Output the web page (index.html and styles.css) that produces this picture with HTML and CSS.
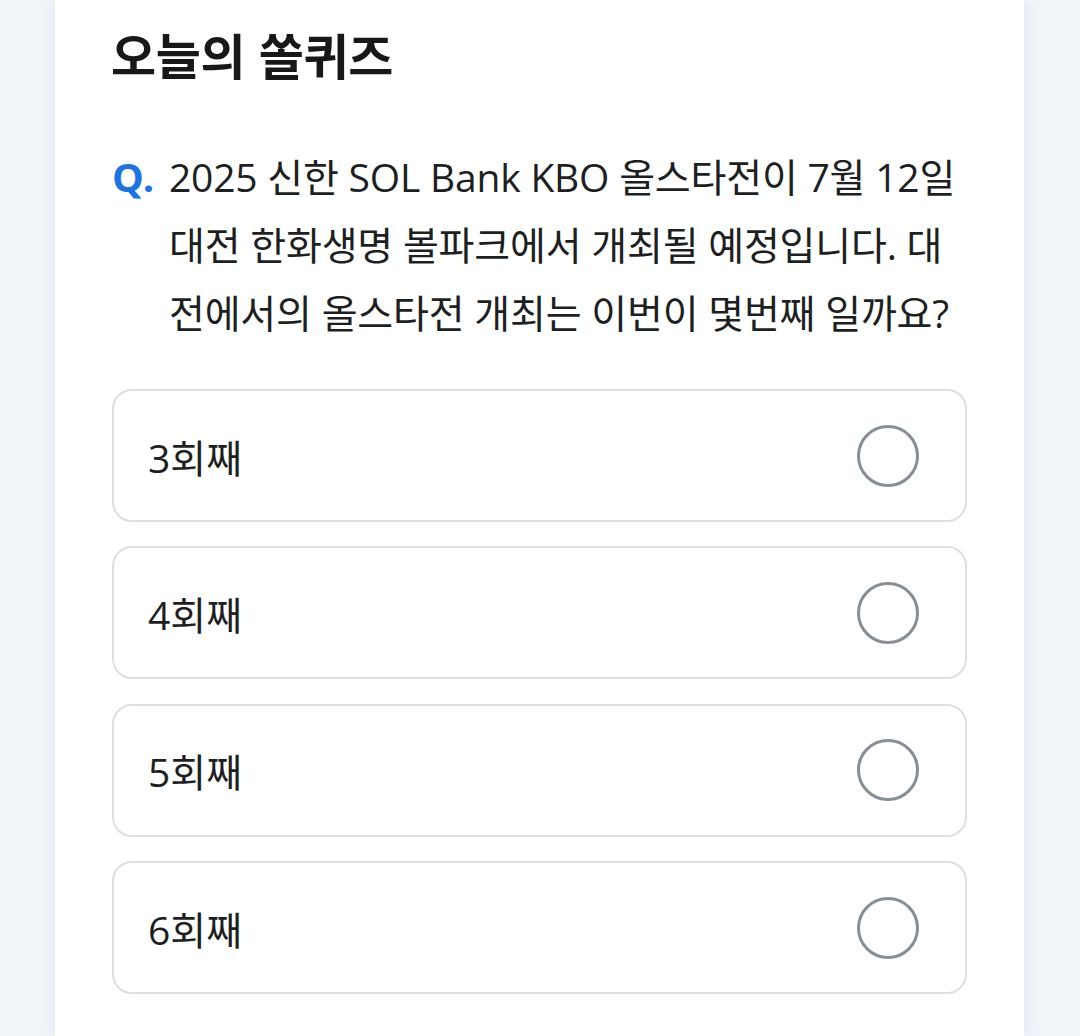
FILE: index.html
```html
<!DOCTYPE html>
<html lang="ko">
<head>
<meta charset="utf-8">
<link rel="stylesheet" href="styles.css">
</head>
<body>
<div class="page">
  <main class="card">
    <h1 class="title">오늘의 쏠퀴즈</h1>
    <div class="question">
      <span class="q-mark">Q.</span>
      <p class="q-text">2025 신한 SOL Bank KBO 올스타전이 7월 12일 대전 한화생명 볼파크에서 개최될 예정입니다. 대전에서의 올스타전 개최는 이번이 몇번째 일까요?</p>
    </div>
    <ul class="options">
      <li class="option"><span class="opt-label">3회째</span><span class="radio"></span></li>
      <li class="option"><span class="opt-label">4회째</span><span class="radio"></span></li>
      <li class="option"><span class="opt-label">5회째</span><span class="radio"></span></li>
      <li class="option"><span class="opt-label">6회째</span><span class="radio"></span></li>
    </ul>
  </main>
</div>
</body>
</html>
```
FILE: styles.css
```css
* { box-sizing: border-box; }
html, body {
  margin: 0;
  padding: 0;
  background: #f1f4f9;
  font-family: "Noto Sans CJK KR", "Noto Sans", sans-serif;
  color: #191b1d;
}
.page {
  width: 1080px;
  height: 1036px;
  overflow: hidden;
  display: flex;
  justify-content: flex-start;
}
.card {
  margin-left: 55px;
  width: 969px;
  min-height: 1036px;
  background: #ffffff;
  padding: 22px 57px 0 57px;
  box-shadow: 0 0 14px rgba(200, 212, 230, 0.45);
}
.title {
  margin: 0 0 0 -1px;
  font-size: 49px;
  font-weight: 700;
  line-height: 64px;
  letter-spacing: -0.3px;
  color: #16181a;
}
.question {
  display: flex;
  margin-top: 57px;
  gap: 13px;
}
.q-mark {
  flex: none;
  color: #1b74e4;
  font-family: "Open Sans", "Noto Sans CJK KR", sans-serif;
  font-size: 40px;
  font-weight: 700;
  line-height: 68px;
  letter-spacing: -1px;
  width: 44px;
}
.q-text {
  margin: 0;
  padding-right: 6px;
  font-family: "Open Sans", "Noto Sans CJK KR", sans-serif;
  font-size: 39px;
  line-height: 68px;
  letter-spacing: -0.2px;
  word-break: break-all;
  color: #1d1f22;
  font-weight: 400;
}
.options {
  list-style: none;
  margin: 42px 0 0 0;
  padding: 0;
  display: flex;
  flex-direction: column;
  gap: 24.4px;
}
.option {
  height: 133px;
  border: 2px solid #dcdfe2;
  border-radius: 20px;
  display: flex;
  align-items: center;
  justify-content: space-between;
  padding: 0 46px 0 34px;
}
.opt-label {
  font-family: "Open Sans", "Noto Sans CJK KR", sans-serif;
  font-size: 39px;
  letter-spacing: 0;
  color: #1d1f22;
}
.radio {
  width: 62px;
  height: 62px;
  border: 3px solid #878e96;
  border-radius: 50%;
  flex: none;
}
```
